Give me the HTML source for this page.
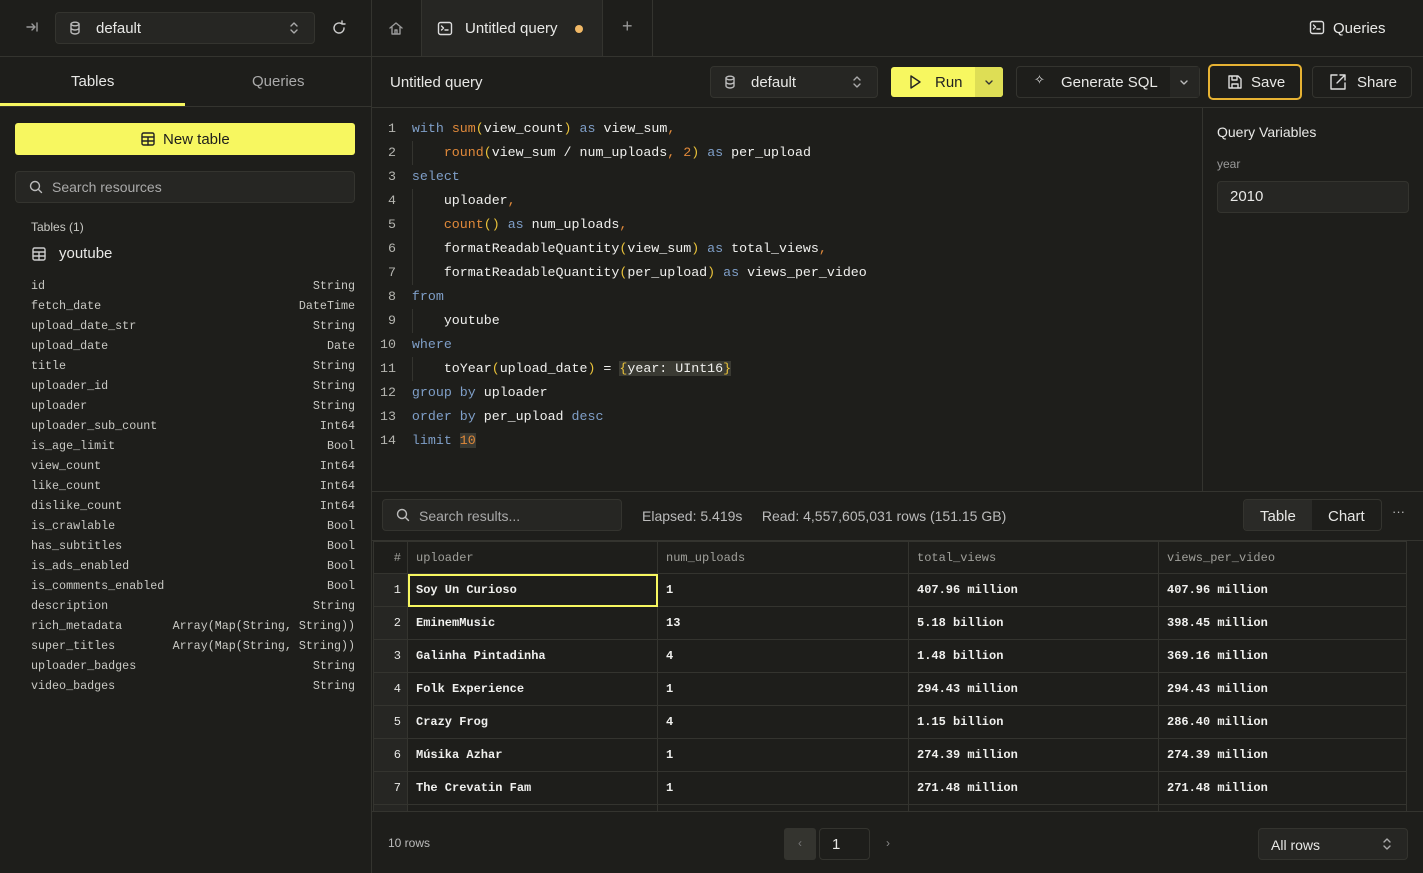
<!DOCTYPE html>
<html><head><meta charset="utf-8"><style>
*{box-sizing:border-box;margin:0;padding:0}
body{width:1423px;height:873px;background:#1e1e1b;color:#e8e8e6;font-family:"Liberation Sans",sans-serif;font-size:14px;position:relative;overflow:hidden}
.abs{position:absolute}
.mono{font-family:"Liberation Mono",monospace}
.bl{border-color:#34342f;border-style:solid;border-width:0}
.box{background:#262623;border:1px solid #34342f;border-radius:4px}
svg{position:absolute;fill:none;stroke:currentColor;stroke-width:1.4;stroke-linecap:round;stroke-linejoin:round}
.code div{height:24px;line-height:24px;white-space:pre}
.k{color:#7f9fc8}.f{color:#e0893a}.p{color:#e9c23a}.c{color:#8b8b85}
.ln{position:absolute;left:0;width:24px;text-align:right;color:#b5b5b0}
.cols div{height:20px;line-height:20px;display:flex;justify-content:space-between;color:#c9c9c4}
table{border-collapse:collapse;position:absolute;left:373px;top:541px;width:1034px}
td{border:1px solid #34342f;height:33px;padding-left:8px;font-family:"Liberation Mono",monospace;font-size:12px;font-weight:bold;color:#f0f0ee;white-space:nowrap}
tr.h td{height:32px;font-weight:normal;color:#a0a09b;background:#1e1e1b}
td.n{width:34px;padding:0 6px 0 0;text-align:right;font-weight:normal;background:#262623;color:#e8e8e6}
tr.h td.n{background:#1e1e1b}
tr td{background:#1e1e1b}
</style></head><body>
<!-- top bar -->
<div class="abs bl" style="left:0;top:0;width:1423px;height:57px;border-bottom-width:1px"></div>
<div class="abs bl" style="left:371px;top:0;width:1px;height:873px;border-left-width:1px"></div>
<div class="abs" style="left:25px;top:20px;color:#999">
<svg width="14" height="14" style="left:0;top:0"><path d="M2 7h8M7 4l3 3-3 3M12 3v8"/></svg></div>
<div class="abs box" style="left:55px;top:12px;width:260px;height:32px"></div>
<svg width="12" height="14" style="left:69px;top:21px;color:#bbb"><ellipse cx="6" cy="3" rx="4" ry="1.8"/><path d="M2 3v8c0 1 2 2 4 2s4-1 4-2V3M2 7c0 1 2 2 4 2s4-1 4-2"/></svg>
<div class="abs" style="left:96px;top:20px;font-size:15px">default</div>
<svg width="10" height="14" style="left:289px;top:21px;color:#aaa"><path d="M2 5l3-3 3 3M2 9l3 3 3-3"/></svg>
<svg width="16" height="16" style="left:331px;top:20px;color:#ccc"><path d="M13 8a5 5 0 1 1-2-4M11 1v3h3"/></svg>
<svg width="16" height="16" style="left:388px;top:20px;color:#999"><path d="M2 8l6-5 6 5M4 7v7h8V7M7 14v-4h2v4"/></svg>
<div class="abs bl" style="left:421px;top:0;width:182px;height:56px;background:#262623;border-left-width:1px;border-right-width:1px"></div>
<svg width="16" height="16" style="left:437px;top:21px;color:#ddd"><rect x="1.5" y="1.5" width="13" height="12" rx="2"/><path d="M4.5 5l2 2-2 2M8 9h3"/></svg>
<div class="abs" style="left:465px;top:20px;font-size:15px">Untitled query</div>
<div class="abs" style="left:575px;top:25px;width:8px;height:8px;border-radius:50%;background:#f0b866"></div>
<div class="abs" style="left:622px;top:16px;font-size:18px;color:#999">+</div>
<div class="abs bl" style="left:652px;top:0;width:1px;height:56px;border-left-width:1px"></div>
<svg width="16" height="16" style="left:1309px;top:20px;color:#ddd"><rect x="1.5" y="1.5" width="13" height="12" rx="2"/><path d="M4.5 5l2 2-2 2M8 9h3"/></svg>
<div class="abs" style="left:1333px;top:20px;font-size:15px">Queries</div>

<!-- sidebar -->
<div class="abs bl" style="left:0;top:106px;width:371px;height:1px;border-top-width:1px"></div>
<div class="abs" style="left:0;top:103px;width:185px;height:3px;background:#f7f760"></div>
<div class="abs" style="left:71px;top:73px;font-size:15px">Tables</div>
<div class="abs" style="left:252px;top:73px;font-size:15px;color:#aaa">Queries</div>
<div class="abs" style="left:15px;top:123px;width:340px;height:32px;background:#f7f760;border-radius:3px"></div>
<div class="abs" style="left:163px;top:131px;color:#1e1e1b;font-size:15px">New table</div>
<svg width="14" height="14" style="left:141px;top:132px;color:#222"><rect x="1" y="1" width="12" height="12" rx="1.5"/><path d="M1 5h12M1 9h12M7 5v8"/></svg>
<div class="abs box" style="left:15px;top:171px;width:340px;height:32px"></div>
<svg width="14" height="14" style="left:29px;top:180px;color:#bbb"><circle cx="6" cy="6" r="4.5"/><path d="M9.5 9.5l3 3"/></svg>
<div class="abs" style="left:52px;top:179px;font-size:14px;color:#aaa">Search resources</div>
<div class="abs" style="left:31px;top:220px;font-size:12px;color:#c9c9c4">Tables (1)</div>
<svg width="14" height="14" style="left:32px;top:247px;color:#ccc"><rect x="1" y="1" width="12" height="12" rx="1.5"/><path d="M1 5h12M1 9h12M7 5v8"/></svg>
<div class="abs" style="left:59px;top:245px;font-size:15px">youtube</div>
<div class="abs mono cols" style="left:31px;top:276px;width:324px;font-size:11.7px">
<div><span>id</span><span>String</span></div><div><span>fetch_date</span><span>DateTime</span></div><div><span>upload_date_str</span><span>String</span></div><div><span>upload_date</span><span>Date</span></div><div><span>title</span><span>String</span></div><div><span>uploader_id</span><span>String</span></div><div><span>uploader</span><span>String</span></div><div><span>uploader_sub_count</span><span>Int64</span></div><div><span>is_age_limit</span><span>Bool</span></div><div><span>view_count</span><span>Int64</span></div><div><span>like_count</span><span>Int64</span></div><div><span>dislike_count</span><span>Int64</span></div><div><span>is_crawlable</span><span>Bool</span></div><div><span>has_subtitles</span><span>Bool</span></div><div><span>is_ads_enabled</span><span>Bool</span></div><div><span>is_comments_enabled</span><span>Bool</span></div><div><span>description</span><span>String</span></div><div><span>rich_metadata</span><span>Array(Map(String, String))</span></div><div><span>super_titles</span><span>Array(Map(String, String))</span></div><div><span>uploader_badges</span><span>String</span></div><div><span>video_badges</span><span>String</span></div>
</div>

<!-- editor toolbar -->
<div class="abs bl" style="left:372px;top:107px;width:1051px;height:1px;border-top-width:1px"></div>
<div class="abs" style="left:390px;top:74px;font-size:15px">Untitled query</div>
<div class="abs box" style="left:710px;top:66px;width:168px;height:32px"></div>
<svg width="12" height="14" style="left:724px;top:75px;color:#bbb"><ellipse cx="6" cy="3" rx="4" ry="1.8"/><path d="M2 3v8c0 1 2 2 4 2s4-1 4-2V3M2 7c0 1 2 2 4 2s4-1 4-2"/></svg>
<div class="abs" style="left:751px;top:74px;font-size:15px">default</div>
<svg width="10" height="14" style="left:852px;top:75px;color:#aaa"><path d="M2 5l3-3 3 3M2 9l3 3 3-3"/></svg>
<div class="abs" style="left:891px;top:67px;width:112px;height:30px;background:#f7f760;border-radius:3px"></div>
<div class="abs" style="left:975px;top:67px;width:28px;height:30px;background:#dede55;border-radius:0 3px 3px 0"></div>
<svg width="14" height="16" style="left:908px;top:74px;color:#222"><path d="M3 2l9 6-9 6z"/></svg>
<div class="abs" style="left:935px;top:74px;font-size:15px;color:#222">Run</div>
<svg width="8" height="6" style="left:985px;top:80px;color:#333"><path d="M1 1l3 3 3-3"/></svg>
<div class="abs box" style="left:1016px;top:66px;width:184px;height:32px;background:#1e1e1b"></div>
<div class="abs" style="left:1034px;top:72px;font-size:13px;color:#ddd">✧</div>
<div class="abs" style="left:1061px;top:74px;font-size:15px">Generate SQL</div>
<div class="abs" style="left:1170px;top:67px;width:29px;height:30px;background:#262623"></div>
<svg width="8" height="6" style="left:1180px;top:80px;color:#bbb"><path d="M1 1l3 3 3-3"/></svg>
<div class="abs" style="left:1208px;top:64px;width:94px;height:36px;border:2px solid #e6b233;border-radius:5px"></div>
<svg width="16" height="16" style="left:1227px;top:74px;color:#ddd"><path d="M2 2h9l3 3v9H2z M5 2v4h5V2M5 14v-4h6v4"/></svg>
<div class="abs" style="left:1251px;top:74px;font-size:15px">Save</div>
<div class="abs box" style="left:1312px;top:66px;width:100px;height:32px;background:#1e1e1b"></div>
<svg width="18" height="18" style="left:1329px;top:73px;color:#ddd"><path d="M8 2H2v14h14v-6M11 2h5v5M16 2L8 10"/></svg>
<div class="abs" style="left:1357px;top:74px;font-size:15px">Share</div>

<!-- code -->
<div class="abs mono code" style="left:372px;top:117px;width:820px;font-size:13.3px;color:#f0f0ee">
<div><span class="ln">1</span>     <span class="k">with</span> <span class="f">sum</span><span class="p">(</span>view_count<span class="p">)</span> <span class="k">as</span> view_sum<span class="f">,</span></div>
<div><span class="ln">2</span>         <span class="f">round</span><span class="p">(</span>view_sum / num_uploads<span class="f">,</span> <span class="f">2</span><span class="p">)</span> <span class="k">as</span> per_upload</div>
<div><span class="ln">3</span>     <span class="k">select</span></div>
<div><span class="ln">4</span>         uploader<span class="f">,</span></div>
<div><span class="ln">5</span>         <span class="f">count</span><span class="p">()</span> <span class="k">as</span> num_uploads<span class="f">,</span></div>
<div><span class="ln">6</span>         formatReadableQuantity<span class="p">(</span>view_sum<span class="p">)</span> <span class="k">as</span> total_views<span class="f">,</span></div>
<div><span class="ln">7</span>         formatReadableQuantity<span class="p">(</span>per_upload<span class="p">)</span> <span class="k">as</span> views_per_video</div>
<div><span class="ln">8</span>     <span class="k">from</span></div>
<div><span class="ln">9</span>         youtube</div>
<div><span class="ln">10</span>     <span class="k">where</span></div>
<div><span class="ln">11</span>         toYear<span class="p">(</span>upload_date<span class="p">)</span> = <span style="background:#3a3a33"><span class="p">{</span>year: UInt16<span class="p">}</span></span></div>
<div><span class="ln">12</span>     <span class="k">group by</span> uploader</div>
<div><span class="ln">13</span>     <span class="k">order by</span> per_upload <span class="k">desc</span></div>
<div><span class="ln">14</span>     <span class="k">limit</span> <span class="f" style="background:#3a3a33">10</span></div>
</div>
<div class="abs" style="left:412px;top:141px;width:1px;height:24px;background:#34342f"></div>
<div class="abs" style="left:412px;top:189px;width:1px;height:96px;background:#34342f"></div>
<div class="abs" style="left:412px;top:309px;width:1px;height:24px;background:#34342f"></div>
<div class="abs" style="left:412px;top:357px;width:1px;height:24px;background:#34342f"></div>

<!-- variables -->
<div class="abs bl" style="left:1202px;top:108px;width:1px;height:383px;border-left-width:1px"></div>
<div class="abs" style="left:1217px;top:124px;font-size:14px">Query Variables</div>
<div class="abs" style="left:1217px;top:157px;font-size:12px;color:#999">year</div>
<div class="abs box" style="left:1217px;top:181px;width:192px;height:32px"></div>
<div class="abs" style="left:1230px;top:188px;font-size:15px">2010</div>

<!-- results toolbar -->
<div class="abs bl" style="left:372px;top:491px;width:1051px;height:1px;border-top-width:1px"></div>
<div class="abs box" style="left:382px;top:499px;width:240px;height:32px"></div>
<svg width="14" height="14" style="left:396px;top:508px;color:#bbb"><circle cx="6" cy="6" r="4.5"/><path d="M9.5 9.5l3 3"/></svg>
<div class="abs" style="left:419px;top:508px;font-size:14px;color:#aaa">Search results...</div>
<div class="abs" style="left:642px;top:508px;font-size:14px;color:#bbb">Elapsed: 5.419s&nbsp;&nbsp;&nbsp;&nbsp;&nbsp;Read: 4,557,605,031 rows (151.15 GB)</div>
<div class="abs" style="left:1243px;top:499px;width:139px;height:32px;border:1px solid #34342f;border-radius:4px;background:#1e1e1b"></div>
<div class="abs" style="left:1244px;top:500px;width:68px;height:30px;background:#2a2a27;border-radius:3px 0 0 3px"></div>
<div class="abs" style="left:1260px;top:508px;font-size:15px">Table</div>
<div class="abs" style="left:1328px;top:508px;font-size:15px">Chart</div>
<div class="abs" style="left:1392px;top:504px;font-size:13px;color:#bbb">···</div>
<div class="abs bl" style="left:372px;top:540px;width:1051px;height:1px;border-top-width:1px"></div>

<table>
<tr class="h"><td class="n">#</td><td style="width:250px">uploader</td><td style="width:251px">num_uploads</td><td style="width:250px">total_views</td><td>views_per_video</td></tr>
<tr><td class="n">1</td><td style="outline:2px solid #f7f760;outline-offset:-2px">Soy Un Curioso</td><td>1</td><td>407.96 million</td><td>407.96 million</td></tr>
<tr><td class="n">2</td><td>EminemMusic</td><td>13</td><td>5.18 billion</td><td>398.45 million</td></tr>
<tr><td class="n">3</td><td>Galinha Pintadinha</td><td>4</td><td>1.48 billion</td><td>369.16 million</td></tr>
<tr><td class="n">4</td><td>Folk Experience</td><td>1</td><td>294.43 million</td><td>294.43 million</td></tr>
<tr><td class="n">5</td><td>Crazy Frog</td><td>4</td><td>1.15 billion</td><td>286.40 million</td></tr>
<tr><td class="n">6</td><td>Músika Azhar</td><td>1</td><td>274.39 million</td><td>274.39 million</td></tr>
<tr><td class="n">7</td><td>The Crevatin Fam</td><td>1</td><td>271.48 million</td><td>271.48 million</td></tr>
<tr><td class="n">8</td><td></td><td></td><td></td><td></td></tr>
</table>

<!-- footer -->
<div class="abs bl" style="left:372px;top:811px;width:1051px;height:62px;background:#1e1e1b;border-top-width:1px"></div>
<div class="abs" style="left:388px;top:836px;font-size:12px;color:#bbb">10 rows</div>
<div class="abs" style="left:784px;top:828px;width:32px;height:32px;background:#34342f;border-radius:3px;color:#777;text-align:center;line-height:30px;font-size:12px">‹</div>
<div class="abs box" style="left:819px;top:828px;width:51px;height:32px;background:#1e1e1b"></div>
<div class="abs" style="left:832px;top:836px;font-size:15px">1</div>
<div class="abs" style="left:886px;top:836px;font-size:12px;color:#888">›</div>
<div class="abs box" style="left:1258px;top:828px;width:150px;height:32px"></div>
<div class="abs" style="left:1271px;top:837px;font-size:14px">All rows</div>
<svg width="10" height="14" style="left:1382px;top:837px;color:#aaa"><path d="M2 5l3-3 3 3M2 9l3 3 3-3"/></svg>
</body></html>
